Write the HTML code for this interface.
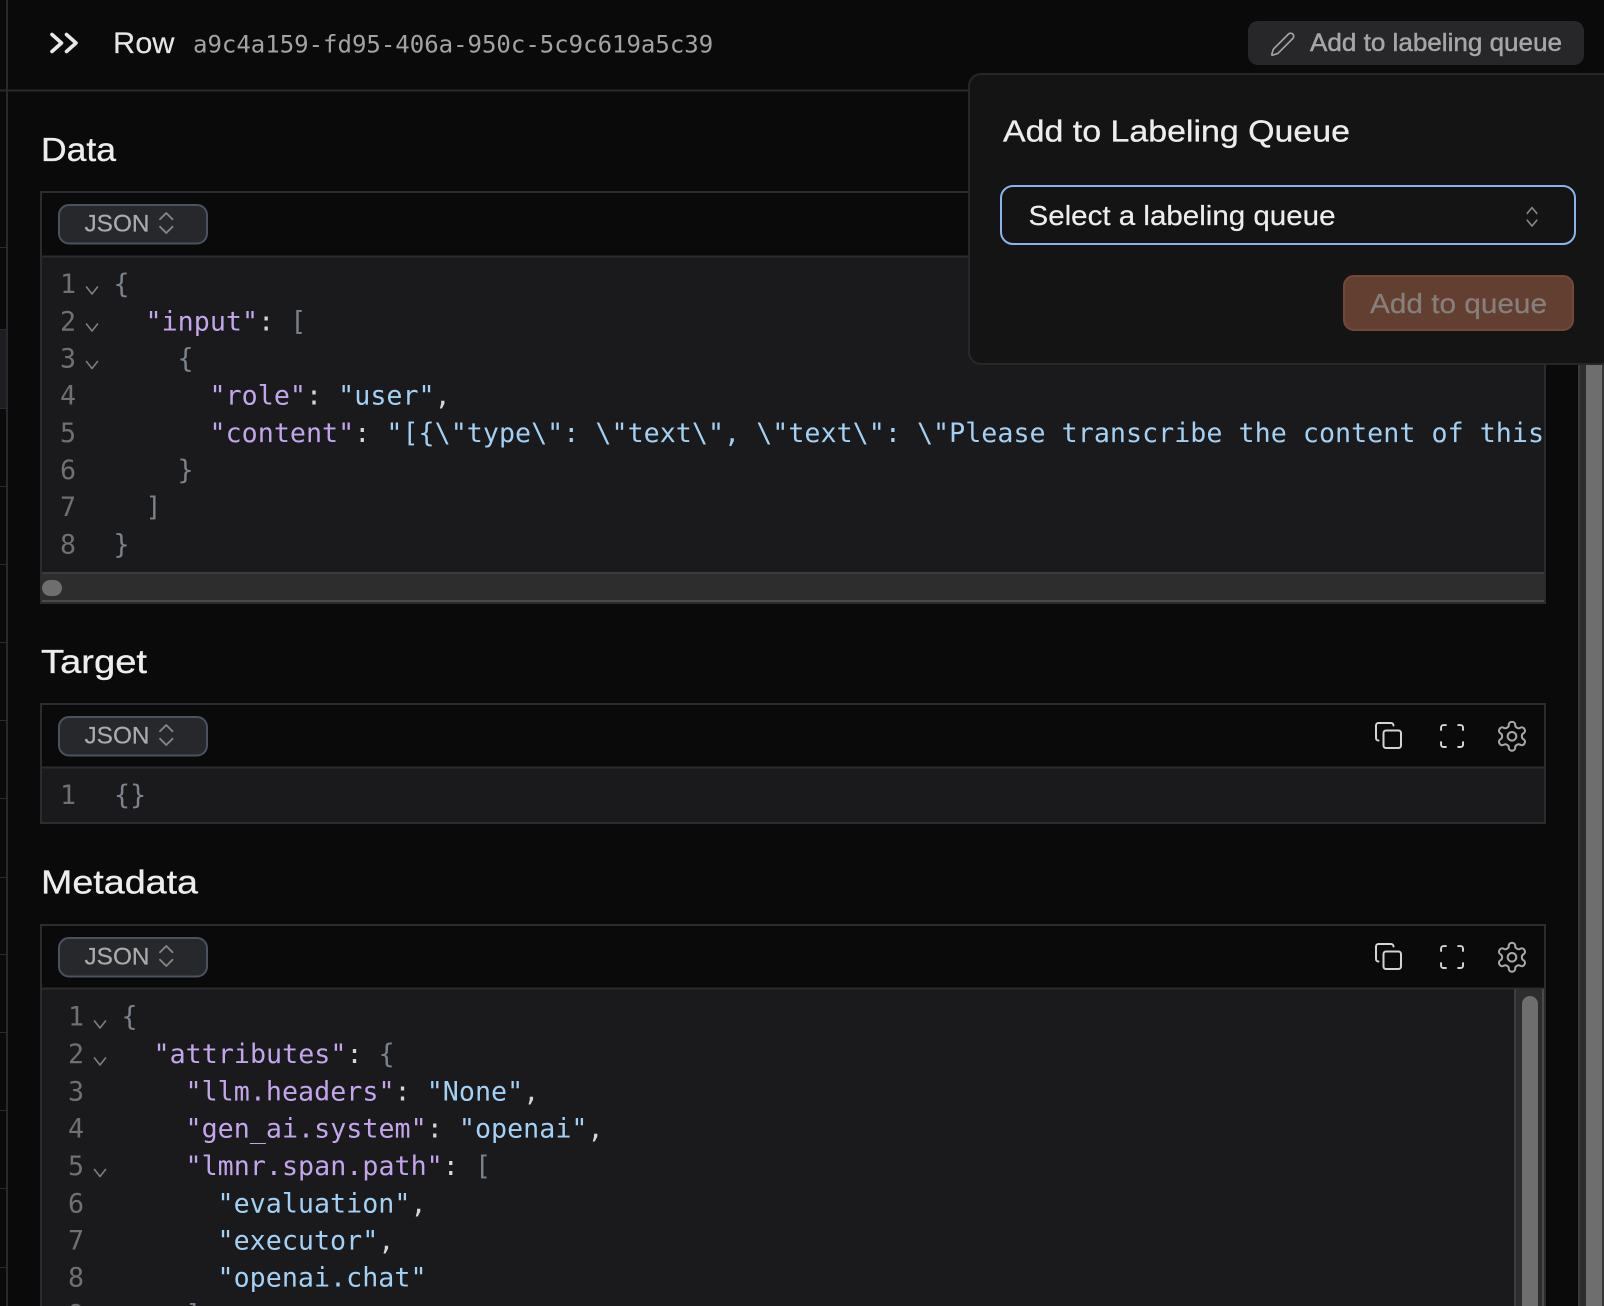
<!DOCTYPE html>
<html lang="en"><head><meta charset="utf-8"><title>Row</title>
<style>
html,body{margin:0;padding:0;background:#0a0a0b;width:1604px;height:1306px;overflow:hidden}
svg{display:block}
.m{font-family:"DejaVu Sans Mono","Liberation Mono",monospace;font-size:26.67px;white-space:pre}
.c{letter-spacing:.03px}
.n{fill:#707070}.k{fill:#c3a5ec}.s{fill:#a3d0f5}.p{fill:#d6d6d6}.b{fill:#7b828c}
.h{font-family:"Liberation Sans",sans-serif;fill:#ededed;stroke:#ededed;stroke-width:.3}
.j{font-family:"Liberation Sans",sans-serif;font-size:24px;fill:#ababab;stroke:#ababab;stroke-width:.2}
.f{fill:none;stroke:#7e7e7e;stroke-width:1.6;stroke-linecap:round;stroke-linejoin:round}
.i{fill:none;stroke-linecap:round;stroke-linejoin:round}
</style></head><body>
<svg width="1604" height="1306" viewBox="0 0 1604 1306" xmlns="http://www.w3.org/2000/svg">
<defs>
<g id="ud"><path class="i" d="m7 15 5 5 5-5M7 9l5-5 5 5"/></g>
<g id="tools">
<g transform="translate(1373.5,720.5) scale(1.25)" class="i" stroke="#d4d4d4" stroke-width="1.6"><rect x="8" y="8" width="14" height="14" rx="2"/><path d="M4 16c-1.1 0-2-.9-2-2V4c0-1.1.9-2 2-2h10c1.1 0 2 .9 2 2"/></g>
<g transform="translate(1437.4,721.4) scale(1.22)" class="i" stroke="#d4d4d4" stroke-width="1.6"><path d="M3 7V5a2 2 0 0 1 2-2h2M17 3h2a2 2 0 0 1 2 2v2M21 17v2a2 2 0 0 1-2 2h-2M7 21H5a2 2 0 0 1-2-2v-2"/></g>
<g transform="translate(1494.7,719) scale(1.44)" class="i" stroke="#a8a8a8" stroke-width="1.4"><path d="M12.22 2h-.44a2 2 0 0 0-2 2v.18a2 2 0 0 1-1 1.73l-.43.25a2 2 0 0 1-2 0l-.15-.08a2 2 0 0 0-2.73.73l-.22.38a2 2 0 0 0 .73 2.73l.15.1a2 2 0 0 1 1 1.72v.51a2 2 0 0 1-1 1.74l-.15.09a2 2 0 0 0-.73 2.73l.22.38a2 2 0 0 0 2.73.73l.15-.08a2 2 0 0 1 2 0l.43.25a2 2 0 0 1 1 1.73V20a2 2 0 0 0 2 2h.44a2 2 0 0 0 2-2v-.18a2 2 0 0 1 1-1.73l.43-.25a2 2 0 0 1 2 0l.15.08a2 2 0 0 0 2.73-.73l.22-.39a2 2 0 0 0-.73-2.73l-.15-.08a2 2 0 0 1-1-1.74v-.5a2 2 0 0 1 1-1.74l.15-.09a2 2 0 0 0 .73-2.73l-.22-.38a2 2 0 0 0-2.73-.73l-.15.08a2 2 0 0 1-2 0l-.43-.25a2 2 0 0 1-1-1.73V4a2 2 0 0 0-2-2z"/><circle cx="12" cy="12" r="3"/></g>
</g>
</defs>
<rect width="1604" height="1306" fill="#0a0a0b"/>
<!-- left sliver -->
<rect x="0" y="329" width="6" height="79" fill="#1e1e22"/>
<g fill="#2a2a2e">
<rect x="0" y="89.5" width="1604" height="2"/>
<rect x="0" y="247" width="6" height="1"/><rect x="0" y="329" width="6" height="1"/><rect x="0" y="408" width="6" height="1"/><rect x="0" y="486" width="6" height="1"/><rect x="0" y="564" width="6" height="1"/><rect x="0" y="642" width="6" height="1"/><rect x="0" y="720" width="6" height="1"/><rect x="0" y="798" width="6" height="1"/><rect x="0" y="877" width="6" height="1"/><rect x="0" y="954" width="6" height="1"/><rect x="0" y="1032" width="6" height="1"/><rect x="0" y="1110" width="6" height="1"/><rect x="0" y="1188" width="6" height="1"/><rect x="0" y="1267" width="6" height="1"/>
<rect x="6" y="0" width="2" height="1306"/>
</g>
<!-- page scrollbar -->
<rect x="1578" y="340" width="2" height="966" fill="#3a3a3a"/>
<rect x="1580" y="340" width="24" height="966" fill="#2d2d2d"/>
<rect x="1586" y="340" width="16" height="966" fill="#6e6e6e"/>
<rect x="1602" y="340" width="2" height="966" fill="#363636"/>
<!-- header -->
<path class="i" stroke="#e8e8e8" stroke-width="3.6" d="M52 34.500 61.500 43 52 51.500M66.500 34.500 76 43 66.500 51.500"/>
<text class="h" x="113" y="53" font-size="30" textLength="61.500" lengthAdjust="spacingAndGlyphs" style="fill:#e6e6e6;stroke:#e6e6e6;stroke-width:.15">Row</text>
<text class="m" x="193" y="52.500" style="font-size:24px" fill="#a3a3a3">a9c4a159-fd95-406a-950c-5c9c619a5c39</text>
<rect x="1248" y="21" width="336" height="44" rx="10" fill="#27272a"/>
<g transform="translate(1269.5,31) scale(1.1)" class="i" stroke="#a3a3a3" stroke-width="1.5"><path d="M21.174 6.812a1 1 0 0 0-3.986-3.987L3.842 16.174a2 2 0 0 0-.5.83l-1.321 4.352a.5.5 0 0 0 .623.622l4.353-1.32a2 2 0 0 0 .83-.497z"/></g>
<text class="h" x="1310" y="51" font-size="25" textLength="252" lengthAdjust="spacingAndGlyphs" style="fill:#a6a6a8;stroke:#a6a6a8;stroke-width:.45">Add to labeling queue</text>
<!-- Data -->
<text class="h" x="41" y="161" font-size="33" textLength="75" lengthAdjust="spacingAndGlyphs">Data</text>
<rect x="41" y="192" width="1504" height="411" fill="#0a0a0b" stroke="#2c2c30" stroke-width="2"/>
<rect x="42" y="257" width="1502" height="315" fill="#1a1a1c"/>
<rect x="42" y="255.5" width="1502" height="2" fill="#2c2c30"/>
<rect x="42" y="572" width="1502" height="30" fill="#2d2d2d"/>
<rect x="42" y="572" width="1502" height="2" fill="#3c3c3c"/>
<rect x="42" y="600" width="1502" height="2" fill="#4a4a4a"/>
<rect x="42" y="580" width="20" height="16" rx="8" fill="#6e6e6e"/>
<rect x="59" y="205" width="148" height="38.500" rx="10" fill="#27282c" stroke="#4a5160" stroke-width="2"/>
<text class="j" x="84.500" y="231.500" textLength="65" lengthAdjust="spacingAndGlyphs">JSON</text>
<g transform="translate(151.250,208) scale(1.25)" stroke="#858585" stroke-width="1.500"><use href="#ud"/></g>
<g class="m c">
<text x="60" y="293" class="n">1</text><text x="113.500" y="293" class="b">{</text>
<text x="60" y="330.400" class="n">2</text><text x="145.500" y="330.400"><tspan class="k">"input"</tspan><tspan class="p">: </tspan><tspan class="b">[</tspan></text>
<text x="60" y="367.400" class="n">3</text><text x="177.500" y="367.400" class="b">{</text>
<text x="60" y="404.600" class="n">4</text><text x="209.500" y="404.600"><tspan class="k">"role"</tspan><tspan class="p">: </tspan><tspan class="s">"user"</tspan><tspan class="p">,</tspan></text>
<text x="60" y="442.200" class="n">5</text><text x="209.500" y="442.200"><tspan class="k">"content"</tspan><tspan class="p">: </tspan><tspan class="s">"[{\"type\": \"text\", \"text\": \"Please transcribe the content of this</tspan></text>
<text x="60" y="479" class="n">6</text><text x="177.500" y="479" class="b">}</text>
<text x="60" y="516.200" class="n">7</text><text x="145.500" y="516.200" class="b">]</text>
<text x="60" y="553.400" class="n">8</text><text x="113.500" y="553.400" class="b">}</text>
</g>
<path class="f" d="M86.500 287l5.500 7 5.500-7M86.500 324l5.500 7 5.500-7M86.500 361.500l5.500 7 5.500-7"/>
<!-- Target -->
<text class="h" x="41" y="673" font-size="33" textLength="106" lengthAdjust="spacingAndGlyphs">Target</text>
<rect x="41" y="704" width="1504" height="119" fill="#0a0a0b" stroke="#2c2c30" stroke-width="2"/>
<rect x="42" y="768" width="1502" height="54" fill="#1a1a1c"/>
<rect x="42" y="766.500" width="1502" height="2" fill="#2c2c30"/>
<rect x="59" y="717" width="148" height="38.500" rx="10" fill="#27282c" stroke="#4a5160" stroke-width="2"/>
<text class="j" x="84.500" y="743.500" textLength="65" lengthAdjust="spacingAndGlyphs">JSON</text>
<g transform="translate(151.250,720) scale(1.25)" stroke="#858585" stroke-width="1.500"><use href="#ud"/></g>
<use href="#tools"/>
<g class="m c"><text x="60" y="804" class="n">1</text><text x="114" y="804" class="b">{}</text></g>
<!-- Metadata -->
<text class="h" x="41" y="893.500" font-size="33" textLength="157" lengthAdjust="spacingAndGlyphs">Metadata</text>
<rect x="41" y="925" width="1504" height="400" fill="#0a0a0b" stroke="#2c2c30" stroke-width="2"/>
<rect x="42" y="989" width="1472" height="317" fill="#1a1a1c"/>
<rect x="42" y="987.500" width="1502" height="2" fill="#2c2c30"/>
<rect x="1514" y="989" width="2" height="317" fill="#3e3e3e"/>
<rect x="1516" y="989" width="26" height="317" fill="#2d2d2d"/>
<rect x="1542" y="989" width="2" height="317" fill="#4a4a4a"/>
<path d="M1522 1004a8 8 0 0 1 16 0V1306h-16z" fill="#6e6e6e"/>
<rect x="59" y="938" width="148" height="38.500" rx="10" fill="#27282c" stroke="#4a5160" stroke-width="2"/>
<text class="j" x="84.500" y="964.500" textLength="65" lengthAdjust="spacingAndGlyphs">JSON</text>
<g transform="translate(151.250,941) scale(1.25)" stroke="#858585" stroke-width="1.500"><use href="#ud"/></g>
<use href="#tools" y="221"/>
<g class="m c">
<text x="68" y="1025.500" class="n">1</text><text x="121.500" y="1025.500" class="b">{</text>
<text x="68" y="1063.200" class="n">2</text><text x="153.500" y="1063.200"><tspan class="k">"attributes"</tspan><tspan class="p">: </tspan><tspan class="b">{</tspan></text>
<text x="68" y="1100.400" class="n">3</text><text x="185.500" y="1100.400"><tspan class="k">"llm.headers"</tspan><tspan class="p">: </tspan><tspan class="s">"None"</tspan><tspan class="p">,</tspan></text>
<text x="68" y="1137.600" class="n">4</text><text x="185.500" y="1137.600"><tspan class="k">"gen_ai.system"</tspan><tspan class="p">: </tspan><tspan class="s">"openai"</tspan><tspan class="p">,</tspan></text>
<text x="68" y="1174.800" class="n">5</text><text x="185.500" y="1174.800"><tspan class="k">"lmnr.span.path"</tspan><tspan class="p">: </tspan><tspan class="b">[</tspan></text>
<text x="68" y="1212.300" class="n">6</text><text x="217.500" y="1212.300"><tspan class="s">"evaluation"</tspan><tspan class="p">,</tspan></text>
<text x="68" y="1249.400" class="n">7</text><text x="217.500" y="1249.400"><tspan class="s">"executor"</tspan><tspan class="p">,</tspan></text>
<text x="68" y="1286.400" class="n">8</text><text x="217.500" y="1286.400" class="s">"openai.chat"</text>
<text x="68" y="1323.600" class="n">9</text><text x="185.500" y="1323.600" class="b">]</text>
</g>
<path class="f" d="M94.500 1021l5.500 7 5.500-7M94.500 1058l5.500 7 5.500-7M94.500 1169.500l5.500 7 5.500-7"/>
<!-- Popover -->
<rect x="969" y="74" width="660" height="290" rx="12" fill="#141415" stroke="#27272a" stroke-width="2"/>
<text class="h" x="1003" y="141.500" font-size="31" textLength="347" lengthAdjust="spacingAndGlyphs">Add to Labeling Queue</text>
<rect x="1001" y="186" width="574" height="58" rx="12" fill="#141415" stroke="#8ab4ee" stroke-width="2"/>
<text class="h" x="1028.500" y="225" font-size="28" textLength="307" lengthAdjust="spacingAndGlyphs" style="stroke-width:.2">Select a labeling queue</text>
<g transform="translate(1520.500,203) scale(.96 1.15)" stroke="#858585" stroke-width="1.600"><use href="#ud"/></g>
<rect x="1344" y="276" width="229" height="54" rx="10" fill="#633f32" stroke="#73483a" stroke-width="2"/>
<text class="h" x="1370" y="313" font-size="28" textLength="177" lengthAdjust="spacingAndGlyphs" style="fill:#867f7b;stroke:#867f7b;stroke-width:.25">Add to queue</text>
</svg>
</body></html>
